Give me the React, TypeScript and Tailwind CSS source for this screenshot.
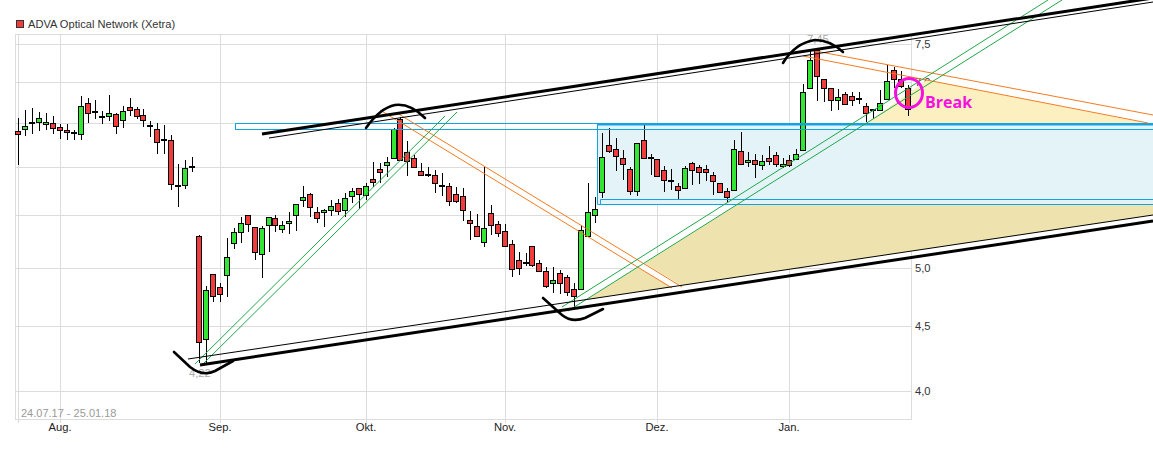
type Candle = [number, number, number, number, number, "r" | "g" | "d"];

// x, wick top, wick bottom, body top, body bottom, colour (all in picture pixels)
const candles: Candle[] = [
  [18, 118, 165, 131, 134, "r"], [25, 110, 136, 126, 129, "g"], [32, 108, 134, 123, 123, "d"], [39, 112, 131, 118, 122, "g"],
  [46, 113, 130, 122, 124, "g"], [53, 116, 134, 123, 128, "r"], [60, 124, 139, 127, 130, "r"], [67, 124, 140, 130, 132, "r"],
  [74, 130, 140, 133, 133, "d"], [81, 96, 140, 106, 134, "g"], [88, 98, 123, 103, 113, "r"], [95, 100, 119, 112, 112, "d"],
  [102, 111, 124, 116, 117, "g"], [109, 95, 121, 113, 116, "g"], [116, 113, 134, 114, 126, "r"], [123, 106, 128, 111, 120, "g"],
  [130, 98, 116, 107, 110, "r"], [137, 107, 119, 109, 116, "r"], [143, 109, 127, 115, 120, "r"], [150, 121, 137, 126, 126, "d"],
  [157, 123, 154, 129, 142, "r"], [164, 125, 154, 140, 140, "d"], [171, 135, 190, 140, 184, "r"], [178, 164, 207, 186, 186, "d"],
  [185, 160, 189, 168, 185, "g"], [192, 157, 172, 166, 167, "g"],
  [199, 235, 363, 236, 342, "r"], [206, 286, 363, 290, 339, "g"], [213, 274, 302, 274, 296, "r"], [220, 283, 302, 287, 294, "r"],
  [227, 238, 297, 257, 275, "g"], [234, 228, 249, 232, 243, "g"], [241, 217, 243, 223, 232, "g"], [248, 215, 232, 215, 224, "r"],
  [255, 227, 260, 227, 252, "r"], [262, 226, 278, 228, 254, "g"], [269, 217, 252, 217, 225, "g"], [275, 215, 232, 218, 225, "r"],
  [282, 221, 233, 225, 229, "g"], [289, 212, 234, 221, 223, "g"], [296, 204, 231, 204, 215, "g"], [303, 186, 207, 197, 200, "g"],
  [310, 193, 217, 194, 207, "r"], [317, 207, 223, 212, 218, "r"], [324, 209, 227, 210, 212, "g"], [331, 200, 216, 206, 210, "g"],
  [338, 199, 215, 203, 211, "r"], [345, 193, 217, 198, 210, "g"], [352, 188, 203, 191, 196, "g"], [359, 188, 209, 188, 194, "r"],
  [366, 183, 200, 186, 195, "g"], [373, 162, 187, 179, 182, "r"], [380, 163, 183, 169, 172, "r"], [387, 157, 177, 162, 165, "g"],
  [394, 128, 158, 129, 158, "g"], [400, 117, 160, 119, 160, "r"], [407, 141, 176, 152, 161, "r"], [414, 155, 167, 158, 167, "r"],
  [421, 163, 175, 171, 175, "r"], [428, 167, 177, 175, 175, "d"], [435, 170, 193, 175, 183, "r"], [442, 173, 196, 186, 186, "d"],
  [449, 183, 206, 186, 201, "r"], [456, 187, 203, 194, 201, "r"], [463, 188, 221, 196, 210, "r"], [470, 211, 240, 220, 223, "r"],
  [477, 214, 237, 226, 236, "r"], [484, 167, 247, 228, 242, "g"], [491, 205, 235, 213, 225, "r"], [498, 221, 237, 224, 233, "r"],
  [505, 224, 247, 231, 246, "r"], [512, 240, 277, 244, 269, "r"], [519, 252, 275, 260, 268, "r"], [526, 253, 266, 263, 263, "d"],
  [532, 246, 267, 246, 265, "r"], [539, 260, 272, 263, 271, "r"], [546, 267, 288, 271, 286, "r"], [553, 267, 293, 280, 283, "g"],
  [560, 270, 294, 273, 283, "r"], [567, 275, 296, 277, 292, "r"], [574, 283, 307, 289, 296, "r"], [581, 225, 289, 230, 289, "g"],
  [588, 183, 236, 212, 236, "g"], [595, 197, 223, 209, 215, "g"], [602, 133, 198, 157, 192, "g"], [609, 128, 153, 145, 151, "r"],
  [616, 138, 171, 149, 156, "r"], [623, 150, 180, 158, 164, "r"], [630, 167, 195, 169, 191, "r"], [637, 143, 196, 143, 191, "g"],
  [644, 125, 158, 140, 158, "r"], [651, 154, 175, 158, 158, "d"], [657, 159, 176, 159, 176, "r"], [664, 166, 192, 170, 180, "r"],
  [671, 169, 190, 181, 181, "d"], [678, 183, 199, 186, 190, "r"], [685, 166, 188, 168, 188, "g"], [692, 162, 185, 163, 170, "r"],
  [699, 165, 184, 167, 172, "r"], [706, 165, 181, 169, 172, "r"], [713, 172, 195, 175, 181, "r"], [720, 183, 193, 183, 192, "r"],
  [727, 188, 202, 191, 197, "r"], [734, 140, 190, 149, 190, "g"], [741, 132, 164, 151, 164, "r"], [748, 152, 167, 160, 162, "g"],
  [755, 154, 178, 160, 164, "r"], [762, 155, 170, 161, 165, "g"], [769, 146, 165, 158, 161, "r"], [776, 152, 167, 155, 164, "r"],
  [783, 158, 168, 164, 166, "g"], [789, 155, 167, 160, 165, "r"], [796, 149, 160, 154, 159, "g"], [803, 84, 150, 92, 150, "g"],
  [810, 50, 88, 60, 88, "g"], [817, 49, 101, 50, 76, "r"], [824, 79, 102, 79, 88, "r"], [831, 88, 111, 88, 100, "r"],
  [838, 89, 110, 97, 100, "g"], [845, 92, 105, 94, 104, "r"], [852, 92, 106, 96, 100, "r"], [859, 92, 104, 99, 99, "d"],
  [866, 103, 122, 106, 113, "r"], [873, 110, 119, 110, 110, "d"], [880, 90, 110, 103, 110, "g"], [887, 65, 99, 81, 99, "g"],
  [894, 67, 88, 70, 79, "r"], [901, 71, 88, 79, 86, "r"], [908, 85, 116, 88, 109, "r"],
];

const hGrid = [44, 82, 123, 167, 215, 268, 326, 391];
const vGrid = [18, 60, 220, 366, 505, 657, 789];
const yLabels: [string, number][] = [
  ["7,5", 44], ["7,0", 82], ["6,5", 123], ["6,0", 167], ["5,5", 215], ["5,0", 268], ["4,5", 326], ["4,0", 391],
];
const months: [string, number][] = [["Aug.", 60], ["Sep.", 220], ["Okt.", 366], ["Nov.", 505], ["Dez.", 657], ["Jan.", 789]];

function CandleMark({ c }: { c: Candle }) {
  const [x, top, bottom, bodyTop, bodyBottom, kind] = c;
  return (
    <g>
      <line x1={x + 0.5} x2={x + 0.5} y1={top} y2={bottom} stroke="#000" />
      {kind === "d" ? (
        <rect x={x - 3} y={bodyTop - 1} width={6} height={2} fill="#000" />
      ) : (
        <rect
          x={x - 2.5}
          y={bodyTop + 0.5}
          width={5}
          height={bodyBottom - bodyTop}
          fill={kind === "r" ? "#f03c3c" : "#33e633"}
          stroke="#000"
        />
      )}
    </g>
  );
}

function Chart() {
  return (
    <svg width={1153} height={421} viewBox="0 34 1153 421" className="block overflow-visible">
      {/* frame and grid */}
      <g stroke="#dcdcdc" fill="none" shapeRendering="crispEdges">
        <rect x={15.5} y={34.5} width={896} height={385} />
        {hGrid.map((y) => (
          <line key={y} x1={16} x2={911} y1={y + 0.5} y2={y + 0.5} />
        ))}
        {vGrid.map((x) => (
          <line key={x} x1={x + 0.5} x2={x + 0.5} y1={35} y2={423} />
        ))}
      </g>

      <g fontSize={11.2} fill="#333">
        {yLabels.map(([t, y]) => (
          <text key={t} x={915} y={y + 4}>
            {t}
          </text>
        ))}
        {months.map(([t, x]) => (
          <text key={t} x={x} y={431} textAnchor="middle" fill="#222">
            {t}
          </text>
        ))}
      </g>
      <text x={21} y={417} fontSize={11} fill="#9a9a9a">
        24.07.17 - 25.01.18
      </text>
      <text x={189} y={377} fontSize={11.2} fill="#aaa">
        4,22
      </text>
      <text x={807} y={43} fontSize={11.2} fill="#aaa">
        7,45
      </text>

      {/* fills */}
      <polygon points="866,123.5 927,80 1147,123.5" fill="#fdf0c0" />
      <polygon points="597,124 1153,124 1153,204 597,204" fill="#e3f3f8" />
      <polygon points="737,205 1153,205 1153,215 587,299.5" fill="#eee2ae" />
      <polygon points="637,267 644,263 682,286 671,287" fill="#fff" />

      {candles.map((c) => (
        <CandleMark key={c[0]} c={c} />
      ))}

      {/* blue zones */}
      <g fill="none" stroke="#12a3e3">
        <rect x={235.5} y={123.5} width={930} height={6} />
        <line x1={597} x2={1153} y1={124.5} y2={124.5} strokeWidth={2} />
        <path d="M597.5 124V204.5H1153" />
        <path d="M600.5 204V199.5H1153" />
      </g>

      {/* orange lines */}
      <g stroke="#f47b20" fill="none" strokeWidth={1}>
        <line x1={397} y1={113} x2={682} y2={287} />
        <line x1={380} y1={110} x2={672} y2={288} />
        <line x1={810} y1={50} x2={1153} y2={115} />
        <line x1={803} y1={56} x2={1148} y2={123} />
      </g>

      {/* green lines */}
      <g stroke="#1fa84a" fill="none" strokeWidth={1}>
        <line x1={195} y1={364} x2={445} y2={116} />
        <line x1={201} y1={366} x2={457} y2={112} />
        <line x1={562} y1={307} x2={1048} y2={0} />
        <line x1={568} y1={311} x2={1062} y2={0} />
      </g>

      {/* channel lines */}
      <g stroke="#000" fill="none">
        <line x1={262} y1={134} x2={1153} y2={-2} strokeWidth={3} />
        <line x1={269} y1={138} x2={1153} y2={2} strokeWidth={1} />
        <line x1={200} y1={365} x2={1153} y2={221} strokeWidth={3} />
        <line x1={188} y1={359} x2={1153} y2={215} strokeWidth={1} />
      </g>

      {/* hand drawn arcs */}
      <g stroke="#000" fill="none" strokeWidth={2.6} strokeLinecap="round">
        <path d="M174 352L190 367Q203 377 215 371L233 361" />
        <path d="M366 128Q380 108 395 105Q410 103 425 118" />
        <path d="M543 298L562 315Q572 323 585 318L603 309" />
        <path d="M783 63Q795 43 815 40Q830 40 843 52" />
      </g>

      {/* break mark */}
      <ellipse cx={909} cy={93} rx={13.5} ry={14.5} fill="none" stroke="#f50fe0" strokeWidth={3} />
      <text x={925} y={108} fontSize={16} fontWeight={700} fill="#f50fe0" className="font-['Open_Sans',sans-serif]">
        Break
      </text>
    </svg>
  );
}

export default function App() {
  return (
    <div className="w-[1153px] h-[455px] overflow-hidden bg-white font-['Liberation_Sans',sans-serif]">
      <div className="h-[34px] pt-[18px] pl-[16px] flex items-start gap-[4px] text-[11.1px] leading-[13px] text-[#333]">
        <span className="mt-[2px] w-[8px] h-[8px] bg-[#f03c3c] border border-[#333]" />
        <span>ADVA Optical Network (Xetra)</span>
      </div>
      <Chart />
    </div>
  );
}
